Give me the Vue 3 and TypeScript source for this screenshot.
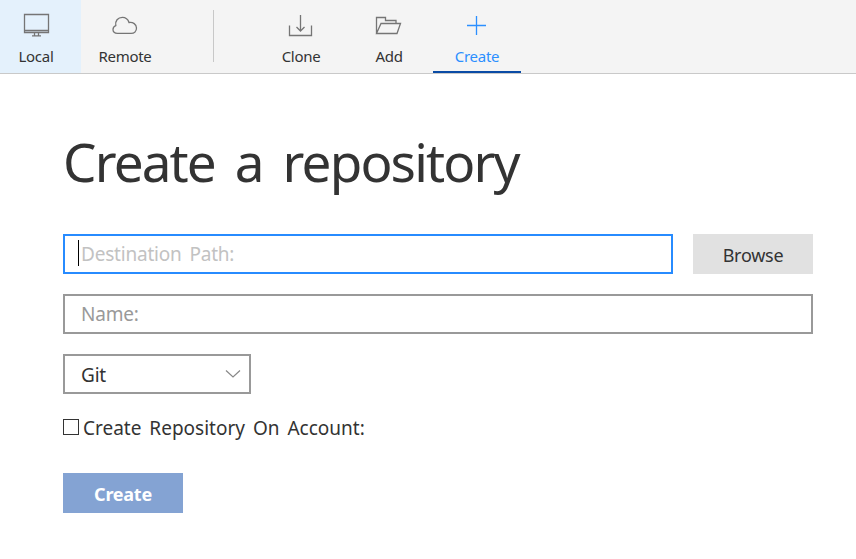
<script setup lang="ts">
import { ref } from 'vue'

const path = ref('')
const name = ref('')
const onAccount = ref(false)
</script>

<template>
  <div class="page">
    <nav class="bar">
      <button class="tab local">
        <svg class="icon" width="32" height="28" viewBox="0 0 32 28">
          <path d="M4.500 4.500h24v18h-24zM4.500 20.500h24M14.500 23v3M18.500 23v3M12 25.800h9" />
        </svg>
        <span class="label">Local</span>
      </button>
      <button class="tab">
        <svg class="icon" width="32" height="28" viewBox="0 0 32 28">
          <path d="M8.500 23.400C5.800 23.400 4 21.900 4 19.600c0-2.100 1.100-3.500 2.800-4C5.900 11 8.800 7.400 13.400 7.400c3.300 0 5.500 1.700 6.600 5.100 3.900-.6 7.500 1.700 7.500 5.500 0 3.300-2.300 5.400-5.400 5.400z" />
        </svg>
        <span class="label">Remote</span>
      </button>
      <span class="divider"></span>
      <button class="tab">
        <svg class="icon" width="32" height="28" viewBox="0 0 32 28">
          <path d="M4.500 15.500v10h22v-10M15.500 5v16M11.500 17l4 4 4-4" />
        </svg>
        <span class="label">Clone</span>
      </button>
      <button class="tab">
        <svg class="icon" width="32" height="28" viewBox="0 0 32 28">
          <path d="M3.500 23.500v-16h9v3h10.500v3M3.500 23.500H24l3.500-10H8z" />
        </svg>
        <span class="label">Add</span>
      </button>
      <button class="tab active">
        <svg class="icon" width="32" height="28" viewBox="0 0 32 28">
          <path d="M15.500 6v19M6 15.500h19" />
        </svg>
        <span class="label">Create</span>
      </button>
    </nav>

    <main class="content">
      <h1>Create a repository</h1>
      <div class="row">
        <label class="field focused">
          <span class="caret"></span>
          <input v-model="path" type="text" placeholder="Destination Path:" />
        </label>
        <button class="btn browse">Browse</button>
      </div>
      <label class="field">
        <input v-model="name" type="text" placeholder="Name:" />
      </label>
      <div class="field select">
        <span>Git</span>
        <svg width="16" height="10" viewBox="0 0 16 10">
          <path d="M1 1.500l7 6.500 7-6.500" />
        </svg>
      </div>
      <label class="check">
        <input v-model="onAccount" type="checkbox" />
        <span class="check-text">Create Repository On Account:</span>
      </label>
      <button class="btn submit">Create</button>
    </main>
  </div>
</template>

<style>
body {
  margin: 0;
  background: #fff;
}
</style>

<style scoped>
.page {
  width: 856px;
  height: 559px;
  overflow: hidden;
  background: #fff;
  color: #333;
  font-family: "Noto Sans", "Open Sans", sans-serif;
}
button,
input {
  font: inherit;
  color: inherit;
  letter-spacing: inherit;
  word-spacing: inherit;
  border: 0;
  border-radius: 0;
  margin: 0;
  padding: 0;
  background: none;
}
.bar {
  box-sizing: border-box;
  display: flex;
  height: 74px;
  background: #f4f4f4;
  border-bottom: 1px solid #c9c9c9;
}
.tab {
  box-sizing: border-box;
  display: flex;
  flex-direction: column;
  align-items: center;
  width: 88px;
  height: 73px;
  padding-top: 10px;
  border-bottom: 2px solid transparent;
}
.tab.local {
  width: 81px;
  padding-right: 9px;
  background: #e4f1fc;
  border-bottom: 0;
}
.tab.active {
  color: #2b8fff;
  border-bottom-color: #0a4ba5;
}
.icon {
  flex: none;
  fill: none;
  stroke: #757575;
  stroke-width: 1.300;
}
.active .icon {
  stroke: #2b8fff;
}
.label {
  margin-top: 8px;
  font-size: 15px;
  line-height: 20px;
  letter-spacing: -0.300px;
  white-space: nowrap;
}
.divider {
  width: 1px;
  height: 52px;
  margin: 10px 43px 0 44px;
  background: #c8c8c8;
}
.content {
  display: flex;
  flex-direction: column;
  align-items: flex-start;
  width: 750px;
  padding-left: 63px;
}
h1 {
  margin: 48px 0 32px;
  height: 80px;
  font-size: 53px;
  line-height: 80px;
  font-weight: 400;
  letter-spacing: -1.850px;
  word-spacing: 8px;
  white-space: nowrap;
}
.row {
  display: flex;
  gap: 20px;
  width: 750px;
  margin-bottom: 20px;
}
.field {
  box-sizing: border-box;
  display: flex;
  align-items: center;
  width: 750px;
  height: 40px;
  padding: 0 13px 0 16px;
  border: 2px solid #999;
  font-size: 19px;
  letter-spacing: -0.200px;
  word-spacing: 3px;
}
.field input {
  flex: 1;
  min-width: 0;
  height: 30px;
  outline: none;
}
.field input::placeholder {
  color: #999;
  opacity: 1;
}
.field.focused {
  flex: 1;
  padding-left: 13px;
  border-color: #278bff;
}
.focused input::placeholder {
  color: #c2c2c2;
}
.caret {
  width: 1px;
  height: 26px;
  margin-right: 2px;
  margin-top: -2px;
  background: #000;
}
.btn {
  box-sizing: border-box;
  width: 120px;
  height: 40px;
  padding-top: 2px;
  font-size: 18px;
  line-height: 38px;
  letter-spacing: -0.250px;
}
.browse {
  background: #e1e1e1;
}
.select {
  justify-content: space-between;
  width: 188px;
  margin-top: 20px;
  padding-right: 8px;
}
.select span {
  padding-top: 2px;
}
.select svg {
  fill: none;
  stroke: #888;
  stroke-width: 1.200;
}
.check {
  display: flex;
  align-items: center;
  gap: 4px;
  height: 30px;
  margin-top: 18px;
  font-size: 19px;
  word-spacing: 3px;
  white-space: nowrap;
}
.check-text {
  padding-top: 2px;
}
.check input {
  appearance: none;
  box-sizing: border-box;
  width: 16px;
  height: 16px;
  border: 1px solid #333;
  background: #fff;
}
.check input:checked {
  background: #333;
}
.submit {
  margin-top: 31px;
  background: #84a3d3;
  color: #fff;
  font-weight: 700;
}
</style>
